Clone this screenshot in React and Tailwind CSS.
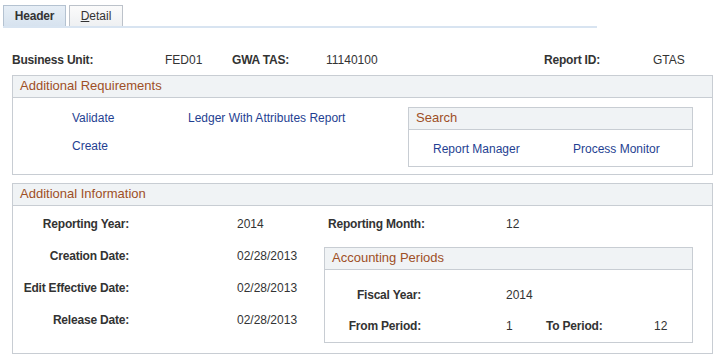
function Panel({ title, className, children }) {
  return (
    <div className={"border border-[#c8cdd3] bg-white " + className}>
      <div className="h-[22px] border-b border-[#c8cdd3] bg-[#f0f3f5] pl-[7px] pb-[2px] flex items-center text-[13px] text-[#9e4f26]">
        {title}
      </div>
      {children}
    </div>
  );
}

function Field({ label, value, labelW, gap }) {
  return (
    <div className="h-[32px] flex items-center">
      <div className={"font-bold tracking-[-0.2px] text-right " + labelW}>{label}</div>
      <div className={gap}>{value}</div>
    </div>
  );
}

export default function App() {
  const link = "text-[#1f3f92]";
  const bold = "font-bold tracking-[-0.2px]";
  return (
    <div className="w-[714px] h-[355px] overflow-hidden bg-white font-['Liberation_Sans',Arial,sans-serif] text-[12px] leading-[14px] text-[#333]">
      {/* tabs */}
      <div className="ml-[3px] w-[594px] pt-[5px] flex gap-[3px] border-b-2 border-[#d8e4f1]">
        <div className={"w-[63px] h-[21px] flex items-center justify-center border border-b-0 border-[#b4c2d1] bg-linear-to-b from-[#e6eef6] to-[#d7e3ef] " + bold}>
          Header
        </div>
        <div className="w-[54px] h-[21px] flex items-center justify-center border border-b-0 border-[#bcc2ca] bg-linear-to-b from-[#fbfbfb] to-[#eef0f2] text-[#333]">
          <span className="underline">D</span>etail
        </div>
      </div>

      {/* key row */}
      <div className="mt-[25px] ml-[12px] flex">
        <div className={"w-[153px] " + bold}>Business Unit:</div>
        <div className="w-[67px]">FED01</div>
        <div className={"w-[94px] " + bold}>GWA TAS:</div>
        <div className="w-[218px]">11140100</div>
        <div className={"w-[109px] " + bold}>Report ID:</div>
        <div>GTAS</div>
      </div>

      {/* additional requirements */}
      <Panel title="Additional Requirements" className="mt-[8px] ml-[12px] w-[701px] h-[100px]">
        <div className="flex">
          <div className="w-[395px] pt-[6px] pl-[59px]">
            <div className="h-[28px] flex items-center">
              <div className={"w-[116px] " + link}>Validate</div>
              <div className={link}>Ledger With Attributes Report</div>
            </div>
            <div className="h-[28px] flex items-center">
              <div className={link}>Create</div>
            </div>
          </div>
          <Panel title="Search" className="mt-[9px] w-[285px] h-[60px]">
            <div className="pt-[12px] pl-[24px] flex">
              <div className={"w-[140px] " + link}>Report Manager</div>
              <div className={link}>Process Monitor</div>
            </div>
          </Panel>
        </div>
      </Panel>

      {/* additional information */}
      <Panel title="Additional Information" className="mt-[8px] ml-[12px] w-[701px] h-[171px]">
        <div className="flex">
          <div className="w-[311px] pt-[2px]">
            <Field label="Reporting Year:" value="2014" labelW="w-[116px]" gap="ml-[108px]" />
            <Field label="Creation Date:" value="02/28/2013" labelW="w-[116px]" gap="ml-[108px]" />
            <Field label="Edit Effective Date:" value="02/28/2013" labelW="w-[116px]" gap="ml-[108px]" />
            <Field label="Release Date:" value="02/28/2013" labelW="w-[116px]" gap="ml-[108px]" />
          </div>
          <div className="pt-[2px]">
            <div className="h-[32px] pl-[4px] flex items-center">
              <div className={"w-[178px] " + bold}>Reporting Month:</div>
              <div>12</div>
            </div>
            <Panel title="Accounting Periods" className="mt-[7px] w-[369px] h-[96px]">
              <div className="pt-[9px]">
                <div className="h-[31px] flex items-center">
                  <div className={"w-[96px] text-right " + bold}>Fiscal Year:</div>
                  <div className="ml-[85px]">2014</div>
                </div>
                <div className="h-[31px] flex items-center">
                  <div className={"w-[96px] text-right " + bold}>From Period:</div>
                  <div className="ml-[85px] w-[40px]">1</div>
                  <div className={"w-[108px] " + bold}>To Period:</div>
                  <div>12</div>
                </div>
              </div>
            </Panel>
          </div>
        </div>
      </Panel>
    </div>
  );
}
